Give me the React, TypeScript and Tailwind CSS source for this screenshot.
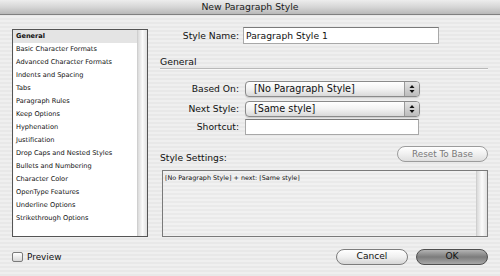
import React from "react";

const items = [
  "General",
  "Basic Character Formats",
  "Advanced Character Formats",
  "Indents and Spacing",
  "Tabs",
  "Paragraph Rules",
  "Keep Options",
  "Hyphenation",
  "Justification",
  "Drop Caps and Nested Styles",
  "Bullets and Numbering",
  "Character Color",
  "OpenType Features",
  "Underline Options",
  "Strikethrough Options",
];

function Arrows() {
  return (
    <svg width="6" height="10" viewBox="0 0 6 10">
      <path d="M3 1 L5.5 4 L0.5 4 Z" fill="#111" />
      <path d="M3 9 L5.5 6 L0.5 6 Z" fill="#111" />
    </svg>
  );
}

function Select({ text }: { text: string }) {
  return (
    <div className="relative h-[16px] w-[175px] rounded-[4px] border border-[#8a8a8a] bg-gradient-to-b from-[#ffffff] via-[#f2f2f2] to-[#d9d9d9] flex items-center pl-[8px] text-[9.7px] text-[#111] shadow-[0_1px_1px_rgba(0,0,0,0.15)]">
      <span className="leading-none">{text}</span>
      <div className="absolute right-0 top-0 bottom-0 w-[15px] rounded-r-[3px] border-l border-[#9a9a9a] bg-gradient-to-b from-[#e4e4e4] via-[#cfcfcf] to-[#bdbdbd] flex items-center justify-center">
        <Arrows />
      </div>
    </div>
  );
}

export default function App() {
  return (
    <div className="w-[500px] h-[276px] overflow-hidden flex flex-col font-['DejaVu_Sans',sans-serif] text-[#111] bg-[repeating-linear-gradient(180deg,#efefef_0px,#efefef_2px,#e8e8e8_2px,#e8e8e8_4px)]">
      <div className="h-[15px] shrink-0 border-b border-[#7f7f7f] bg-gradient-to-b from-[#ededed] via-[#d6d6d6] to-[#b8b8b8] flex items-center justify-center text-[9.3px] text-[#1a1a1a] leading-none">
        New Paragraph Style
      </div>

      <div className="flex px-[12px] pt-[12px] gap-[12px]">
        {/* Left list */}
        <div className="mt-[2px] w-[136px] h-[208px] border border-[#555] bg-white flex shadow-[inset_0_1px_1px_rgba(0,0,0,0.2)]">
          <div className="flex-1 flex flex-col">
            {items.map((t, i) => (
              <div
                key={t}
                className={
                  "h-[13px] shrink-0 flex items-center pl-[3px] text-[6.6px] leading-none " +
                  (i === 0 ? "bg-[#e4e4e4] font-bold" : "")
                }
              >
                {t}
              </div>
            ))}
          </div>
          <div className="w-[10px] bg-gradient-to-r from-[#dadada] via-[#fbfbfb] to-[#e0e0e0] border-l border-[#cfcfcf]" />
        </div>

        {/* Right column */}
        <div className="w-[328px] flex flex-col">
          <div className="h-[17px] flex items-center">
            <div className="w-[79px] text-right text-[9.2px] leading-none">Style Name:</div>
            <div className="ml-[4px] w-[196px] h-[17px] bg-white border border-[#a8a8a8] border-t-[#7a7a7a] flex items-center pl-[2px] text-[9.2px] leading-none">
              Paragraph Style 1
            </div>
          </div>

          <div className="mt-[12px] h-[12px] flex items-center text-[9.3px] leading-none">General</div>
          <div className="h-px bg-[#b9b9b9]" />
          <div className="h-px bg-[#f8f8f8]" />

          <div className="mt-[11px] h-[16px] flex items-center">
            <div className="w-[79px] text-right text-[9.2px] leading-none">Based On:</div>
            <div className="ml-[6px]">
              <Select text="[No Paragraph Style]" />
            </div>
          </div>
          <div className="mt-[4px] h-[16px] flex items-center">
            <div className="w-[79px] text-right text-[9.2px] leading-none">Next Style:</div>
            <div className="ml-[6px]">
              <Select text="[Same style]" />
            </div>
          </div>
          <div className="mt-[2px] h-[16px] flex items-center">
            <div className="w-[79px] text-right text-[9.2px] leading-none">Shortcut:</div>
            <div className="ml-[6px] w-[174px] h-[16px] bg-white border border-[#a8a8a8] border-t-[#7a7a7a]" />
          </div>

          <div className="mt-[11px] h-[16px] flex items-end justify-between">
            <div className="text-[9.2px] leading-none pb-[0px]">Style Settings:</div>
            <div className="w-[91px] h-[16px] rounded-full border border-[#9c9c9c] bg-gradient-to-b from-[#ffffff] via-[#f0f0f0] to-[#dedede] flex items-center justify-center text-[8.8px] text-[#7a7a7a] leading-none">
              Reset To Base
            </div>
          </div>

          <div className="mt-[8px] ml-[2px] h-[67px] border border-[#7a7a7a] flex bg-[repeating-linear-gradient(180deg,#f1f1f1_0px,#f1f1f1_2px,#eaeaea_2px,#eaeaea_4px)]">
            <div className="flex-1 pl-[2px] pt-[4px] text-[6.4px] leading-none">
              [No Paragraph Style] + next: [Same style]
            </div>
            <div className="w-[11px] bg-gradient-to-r from-[#dadada] via-[#fbfbfb] to-[#e0e0e0] border-l border-[#cfcfcf]" />
          </div>
        </div>
      </div>

      <div className="mt-[12px] h-[16px] px-[12px] flex items-center">
        <div className="w-[11px] h-[10px] rounded-[2px] border border-[#7a7a7a] bg-gradient-to-b from-[#ffffff] to-[#d8d8d8]" />
        <div className="ml-[4px] text-[8.9px] leading-none">Preview</div>
        <div className="flex-1" />
        <div className="w-[72px] h-[16px] rounded-full border border-[#7c7c7c] bg-gradient-to-b from-[#ffffff] via-[#f0f0f0] to-[#d6d6d6] flex items-center justify-center text-[9.1px] leading-none">
          Cancel
        </div>
        <div className="ml-[8px] w-[72px] h-[16px] rounded-full border border-[#4f4f4f] bg-gradient-to-b from-[#b4b4b4] via-[#7c7c7c] to-[#a8a8a8] flex items-center justify-center text-[9.1px] leading-none text-[#111]">
          OK
        </div>
      </div>
    </div>
  );
}
